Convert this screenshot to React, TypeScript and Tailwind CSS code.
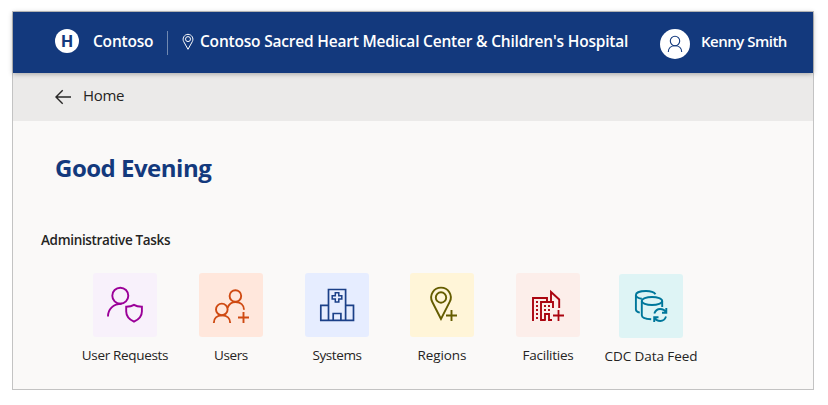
import type { ReactNode } from 'react';

function PinGlyph() {
  return (
    <svg width="12" height="18" viewBox="0 0 12 18" fill="none" stroke="#fff" strokeWidth="1">
      <path d="M6 16.3 L1.7 8.6 A4.9 4.9 0 1 1 10.3 8.6 Z" />
      <circle cx="6" cy="6.1" r="2.5" />
    </svg>
  );
}

function RequestsIcon() {
  return (
    <g stroke="#9b0098">
      <circle cx="27.3" cy="22.7" r="8" />
      <path d="M15 43.4 C15 36 20.4 30.8 28.6 30.8" />
      <path d="M33.2 33.7 C36.5 33.7 39 33.2 41 31.9 C43 33.2 45.5 33.7 48.9 33.7 V38.4 C48.9 43.3 45.3 46.6 41 48.7 C36.7 46.6 33.2 43.3 33.2 38.4 Z" />
    </g>
  );
}

function UsersIcon() {
  return (
    <g stroke="#cf4a12">
      <circle cx="36.4" cy="23" r="5.8" />
      <path d="M28.5 35 C30 31 32.5 29 36.4 29 C41.5 29 45 32 45 36.7" />
      <circle cx="22.8" cy="36.4" r="5.8" />
      <path d="M14.8 50 C14.8 45.5 18 42.4 23 42.4 C28 42.4 31.2 45.5 31.2 50" />
      <path d="M44.5 39 V50 M39 44.5 H50" />
    </g>
  );
}

function SystemsIcon() {
  return (
    <g stroke="#1b4088" strokeWidth="1.7">
      <path d="M23.5 47.3 V16.5 H40.6 V47.3" />
      <path d="M23.5 32.3 H15.8 V47.3 H48.5 V32.3 H40.6" />
      <path d="M28.2 47.3 V40.5 H35.9 V47.3" />
      <path d="M30.3 19.8 H33.8 V22.7 H36.8 V26 H33.8 V29 H30.3 V26 H27.2 V22.7 H30.3 Z" strokeWidth="1.5" />
    </g>
  );
}

function RegionsIcon() {
  return (
    <g stroke="#645c00">
      <path d="M31 46 L22.2 28.7 A9.8 9.8 0 1 1 39.8 28.7 Z" />
      <circle cx="31" cy="24.5" r="5.2" />
      <path d="M41.5 37 V48 M36 42.5 H47" />
    </g>
  );
}

function FacilitiesIcon() {
  return (
    <g stroke="#ab0510">
      <path d="M17 48 V25 H31 V28" />
      <path d="M29.5 47 H25 V29 H37 V35" />
      <path d="M29 47.5 V41 H33 V47 H36" />
      <path d="M35 28 V19 L43.2 26.5 V35" />
      <path d="M21 28 V46" strokeDasharray="2 2" />
      <path d="M29 32 V38 M33 32 V38" strokeDasharray="2 2" />
      <path d="M42.5 37 V48 M37 42.5 H48" strokeWidth="1.8" />
    </g>
  );
}

function FeedIcon() {
  return (
    <g stroke="#00779b">
      <ellipse cx="33" cy="27" rx="10.2" ry="4" />
      <path d="M22.8 27 V41.3 C22.8 43.5 27 45 32.2 45.2 M43.2 27 V33" />
      <path d="M20.8 38.6 C18 38 16.9 37 16.9 35.5 V21 C16.9 18.7 21 17 27 17 C31.5 17 35 18 36.5 20.2 M16.9 21 C17 22.8 19 24.2 22.8 24.8" />
      <path d="M35.3 39.5 C36.5 36.5 38.5 35 41 35 C44 35 46 36.3 47 38.3 M47.3 34 V38.7 H43" />
      <path d="M47 42.5 C46 45.5 43.8 47 41.3 47 C38.5 47 36.6 45.7 35.5 43.5 M35.2 48 V43.2 H39.5" />
    </g>
  );
}

type TileProps = { label: string; tint: string; place: string; text: string; children: ReactNode };

function Tile({ label, tint, place, text, children }: TileProps) {
  return (
    <a className={`flex w-[94px] flex-col items-center ${place}`}>
      <span className={`block size-16 rounded-[3px] ${tint}`}>
        <svg width="64" height="64" viewBox="0 0 64 64" fill="none" strokeWidth="1.9">
          {children}
        </svg>
      </span>
      <span className={`mt-2 text-[13.5px] leading-5 whitespace-nowrap text-[#252423] ${text}`}>{label}</span>
    </a>
  );
}

export default function App() {
  return (
    <div className="h-[405px] w-[828px] bg-white pt-[11px] pl-3 font-['Open_Sans','Noto_Sans',sans-serif]">
      <div className="flex h-[379px] w-[802px] flex-col border border-[#c3c3c3] bg-[#faf9f8]">
        <header className="z-10 flex h-[61px] shrink-0 items-start bg-[#13397d] pl-[42px] font-semibold text-white shadow-[0_1px_5px_rgba(0,0,0,0.3)]">
          <span className="mt-[17px] flex size-6 items-center justify-center rounded-full bg-white text-[16.5px] leading-6 font-bold text-[#13397d]">
            H
          </span>
          <span className="mt-[18px] ml-[14px] w-[74px] text-[15.5px] leading-[22px] tracking-[-0.2px] whitespace-nowrap">Contoso</span>
          <span className="mt-[19px] h-6 w-px bg-[#7189b1]" />
          <span className="mt-[21px] ml-[14px]"><PinGlyph /></span>
          <span className="mt-[18px] ml-[6px] w-[460px] text-[15.5px] leading-[22px] tracking-[-0.2px] whitespace-nowrap">
            Contoso Sacred Heart Medical Center &amp; Children's Hospital
          </span>
          <span className="mt-[17px] size-[30px] rounded-full bg-white">
            <svg width="30" height="30" viewBox="0 0 30 30" fill="none" stroke="#13397d" strokeWidth="1.1">
              <circle cx="15" cy="12" r="4.7" />
              <path d="M8.3 23 C8.3 19.3 11 16.8 15 16.8 C19 16.8 21.7 19.3 21.7 23" />
            </svg>
          </span>
          <span className="mt-[18px] ml-[11px] text-[15px] leading-[22px] tracking-[-0.5px] whitespace-nowrap">Kenny Smith</span>
        </header>
        <nav className="flex h-12 shrink-0 items-start bg-[#ebeae9] pl-[42px]">
          <svg className="mt-4" width="17" height="16" viewBox="0 0 17 16" fill="none" stroke="#292827" strokeWidth="1.4">
            <path d="M16 8 H1 M7.7 1.3 L1 8 L7.7 14.7" />
          </svg>
          <span className="mt-[11px] ml-[11px] text-[15px] leading-[22px] tracking-[-0.3px] text-[#252423]">Home</span>
        </nav>
        <main>
          <h1 className="mt-[31px] ml-[42px] text-[24px] leading-8 font-bold tracking-[-0.5px] whitespace-nowrap text-[#13397d]">
            Good Evening
          </h1>
          <h2 className="mt-[46px] ml-7 text-[13.5px] leading-5 font-semibold tracking-[-0.33px] whitespace-nowrap text-[#252423]">
            Administrative Tasks
          </h2>
          <div className="mt-[23px] flex items-start pl-[65px]">
            <Tile label="User Requests" tint="bg-[#f8f1fb]" place="" text="tracking-[-0.33px]"><RequestsIcon /></Tile>
            <Tile label="Users" tint="bg-[#ffe7dc]" place="ml-3" text="tracking-[-0.4px]"><UsersIcon /></Tile>
            <Tile label="Systems" tint="bg-[#e6edff]" place="ml-3" text="tracking-[-0.4px]"><SystemsIcon /></Tile>
            <Tile label="Regions" tint="bg-[#fff5d8]" place="ml-[11px]" text="tracking-[-0.1px]"><RegionsIcon /></Tile>
            <Tile label="Facilities" tint="bg-[#fceeea]" place="ml-3" text="tracking-[-0.25px]"><FacilitiesIcon /></Tile>
            <Tile label="CDC Data Feed" tint="bg-[#def4f5]" place="mt-px ml-[9px]" text="tracking-[-0.08px]"><FeedIcon /></Tile>
          </div>
        </main>
      </div>
    </div>
  );
}
